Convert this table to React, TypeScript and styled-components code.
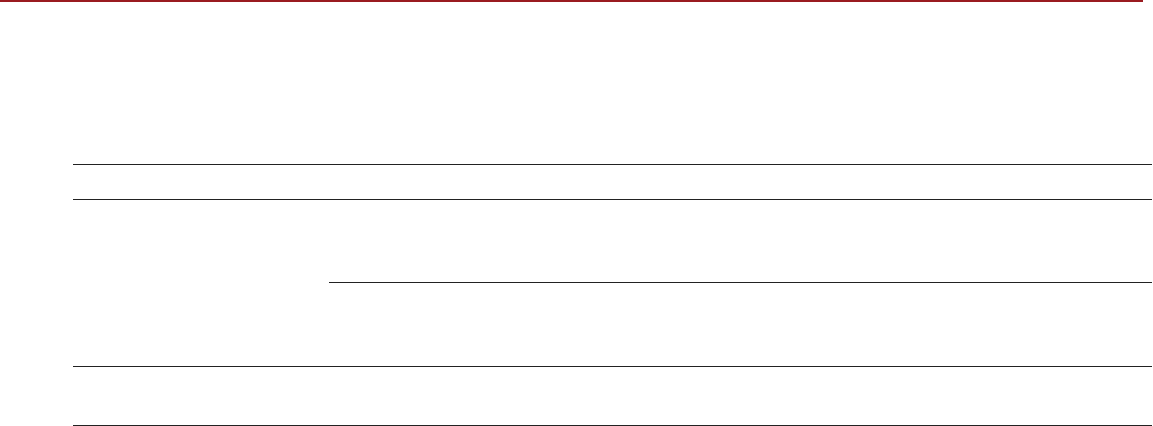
import React, { FC } from "react";
import styled, { createGlobalStyle } from "styled-components";

const GlobalStyle = createGlobalStyle`
  html, body {
    margin: 0;
    padding: 0;
    background: #ffffff;
    font-family: "Liberation Sans", Arial, sans-serif;
  }
`;

const Page = styled.div`
  width: 1153px;
  height: 426px;
  overflow: hidden;
  background: #ffffff;
`;

const AccentBar = styled.div`
  width: 1143px;
  height: 2px;
  background-color: #9a1b20;
`;

const Table = styled.div`
  width: 1079px;
  margin: 162px 0 0 73px;
`;

const Row = styled.div<{ $height: number; $last?: boolean }>`
  height: ${({ $height }) => $height}px;
  border-top: 1px solid #222222;
  border-bottom: ${({ $last }) => ($last ? "1px solid #222222" : "none")};
`;

const Group = styled.div`
  display: grid;
  grid-template-columns: 256px 1fr;
  border-top: 1px solid #222222;
`;

const LabelCell = styled.div`
  grid-row: span 2;
`;

const SubCell = styled.div<{ $height: number; $divider?: boolean }>`
  height: ${({ $height }) => $height}px;
  border-bottom: ${({ $divider }) => ($divider ? "1px solid #222222" : "none")};
`;

const App: FC = () => (
  <Page>
    <GlobalStyle />
    <AccentBar />
    <Table>
      <Row $height={34} />
      <Group>
        <LabelCell />
        <SubCell $height={82} $divider />
        <SubCell $height={83} />
      </Group>
      <Row $height={58} $last />
    </Table>
  </Page>
);

export default App;
